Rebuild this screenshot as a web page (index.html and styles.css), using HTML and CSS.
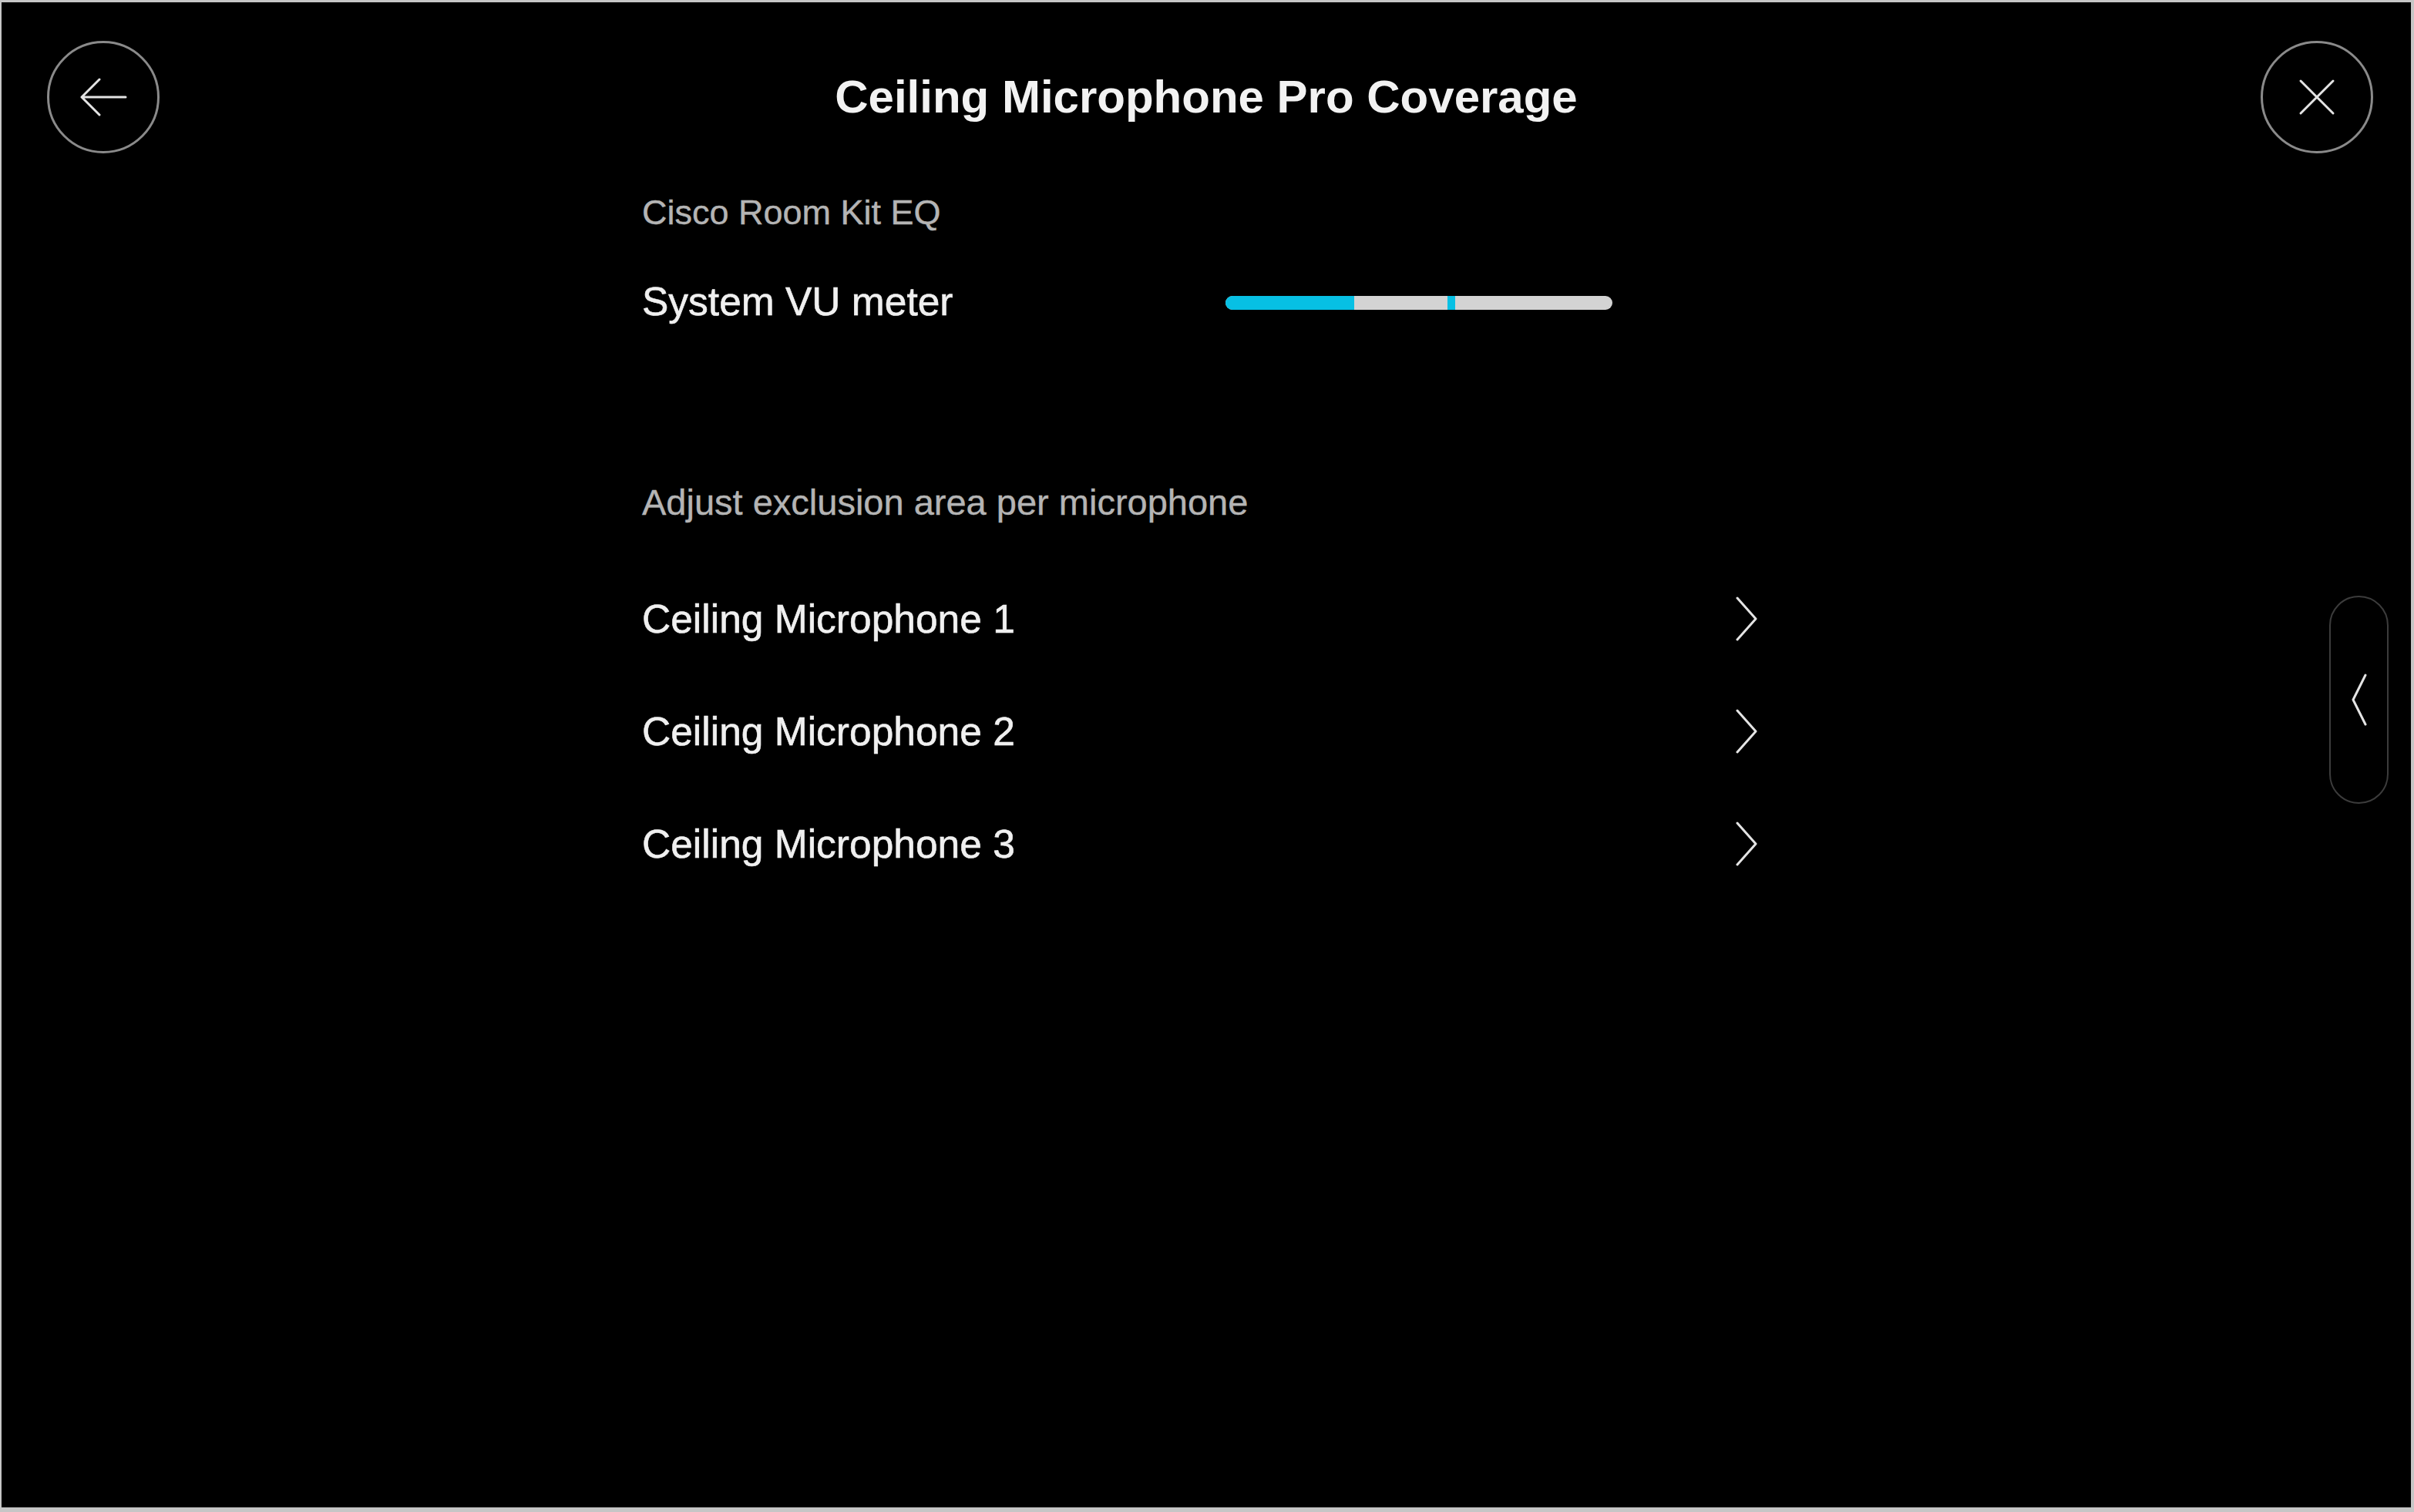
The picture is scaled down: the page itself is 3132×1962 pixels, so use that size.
FILE: index.html
```html
<!DOCTYPE html>
<html lang="en">

<head>
  <meta charset="UTF-8">
  <meta name="viewport" content="width=device-width, initial-scale=1.0">
  <title>Ceiling Microphone Pro Coverage</title>
  <link rel="stylesheet" href="styles.css">
</head>

<body>
  <div class="screen">
    <header class="topbar">
      <button class="round-btn" aria-label="Back">
        <svg width="62" height="50" viewBox="0 0 62 50">
          <path d="M60 25 H3 M26 2 L3 25 L26 48" />
        </svg>
      </button>
      <h1 class="title">Ceiling Microphone Pro Coverage</h1>
      <button class="round-btn" aria-label="Close">
        <svg width="48" height="48" viewBox="0 0 48 48">
          <path d="M3 3 L45 45 M45 3 L3 45" />
        </svg>
      </button>
    </header>

    <main class="panel">
      <p class="section-label">Cisco Room Kit EQ</p>
      <div class="vu-row">
        <span class="row-label">System VU meter</span>
        <div class="vu-meter">
          <div class="vu-level" style="width: 33.3%"></div>
          <div class="vu-peak" style="left: 57.4%"></div>
        </div>
      </div>

      <p class="section-label exclusion">Adjust exclusion area per microphone</p>
      <ul class="mic-list">
        <li class="mic-item">
          <span class="row-label">Ceiling Microphone 1</span>
          <svg class="chevron" width="30" height="58" viewBox="0 0 30 58"><path d="M3 2 L27 29 L3 56" /></svg>
        </li>
        <li class="mic-item">
          <span class="row-label">Ceiling Microphone 2</span>
          <svg class="chevron" width="30" height="58" viewBox="0 0 30 58"><path d="M3 2 L27 29 L3 56" /></svg>
        </li>
        <li class="mic-item">
          <span class="row-label">Ceiling Microphone 3</span>
          <svg class="chevron" width="30" height="58" viewBox="0 0 30 58"><path d="M3 2 L27 29 L3 56" /></svg>
        </li>
      </ul>
    </main>

    <div class="side-tab">
      <svg width="22" height="68" viewBox="0 0 22 68"><path d="M19 2 L3 34 L19 66" /></svg>
    </div>
  </div>
</body>

</html>
```

FILE: styles.css
```css
html,
body {
  margin: 0;
  height: 100%;
}

body {
  background: #c6c6c6;
  font-family: "Liberation Sans", Arial, sans-serif;
  overflow: hidden;
}

.screen {
  position: relative;
  margin: 3px 4px 0 2px;
  height: calc(100vh - 9px);
  background: #000;
  color: #f0f0f0;
}

.topbar {
  display: grid;
  grid-template-columns: 146px 1fr 146px;
  align-items: center;
  padding: 50px 49px 0 59px;
}

.round-btn {
  width: 146px;
  height: 146px;
  box-sizing: border-box;
  border: 3px solid #8a8a8a;
  border-radius: 50%;
  background: none;
  padding: 0;
  display: flex;
  align-items: center;
  justify-content: center;
}

.round-btn svg path,
.chevron path,
.side-tab svg path {
  fill: none;
  stroke: #e4e4e4;
  stroke-width: 3;
  stroke-linecap: round;
  stroke-linejoin: round;
}

.title {
  margin: 0;
  padding-right: 10px;
  text-align: center;
  font-size: 60px;
  font-weight: bold;
  line-height: 70px;
  color: #f2f2f2;
}

.panel {
  width: 1464px;
  margin: 50px auto 0;
}

.section-label {
  margin: 0;
  font-size: 45px;
  line-height: 53px;
  color: #b4b4b4;
  -webkit-text-stroke: 0.4px #b4b4b4;
}

.row-label {
  font-size: 51.5px;
  line-height: 60px;
  color: #f0f0f0;
  -webkit-text-stroke: 0.6px #f0f0f0;
}

.vu-row {
  display: grid;
  grid-template-columns: 757px 502px;
  align-items: center;
  margin-top: 59px;
}

.vu-meter {
  position: relative;
  height: 18px;
  margin-top: 3px;
  border-radius: 9px;
  background: #d3d3d3;
  overflow: hidden;
}

.vu-level {
  height: 100%;
  background: #07c0e4;
}

.vu-peak {
  position: absolute;
  top: 0;
  width: 10px;
  height: 100%;
  background: #07c0e4;
}

.exclusion {
  margin-top: 204px;
  font-size: 47px;
}

.mic-list {
  list-style: none;
  margin: 52px 0 0;
  padding: 0;
}

.mic-item {
  display: flex;
  justify-content: space-between;
  align-items: center;
  height: 146px;
  padding-right: 16px;
}

.side-tab {
  position: absolute;
  top: 770px;
  right: 29px;
  width: 77px;
  height: 270px;
  box-sizing: border-box;
  border: 2px solid #3c3c3c;
  border-radius: 39px;
  display: flex;
  align-items: center;
  justify-content: center;
}
```
